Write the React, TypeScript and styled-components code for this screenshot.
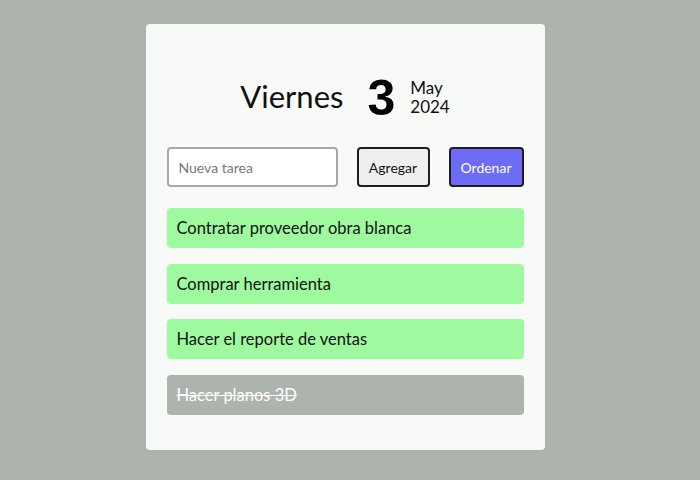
import * as React from "react";
import styled, { createGlobalStyle } from "styled-components";

const GlobalStyle = createGlobalStyle`
  html, body {
    margin: 0;
    padding: 0;
    background: #adb4ad;
    font-family: Lato, "Open Sans", sans-serif;
  }
`;

const Page = styled.div`
  width: 700px;
  height: 480px;
  display: flex;
  justify-content: center;
  padding: 24px 10px 0 0;
  box-sizing: border-box;
`;

const Card = styled.div`
  width: 399px;
  height: 426px;
  box-sizing: border-box;
  background: #f8faf8;
  border-radius: 4px;
  padding: 44px 21px 35px;
`;

const Header = styled.div`
  height: 60px;
  display: flex;
  align-items: center;
  justify-content: center;
  margin-bottom: 19px;
`;

const DayName = styled.span`
  font-size: 31px;
  color: #111;
  margin-right: 24px;
  margin-top: -4px;
`;

const DayNumber = styled.span`
  font-family: "Liberation Sans", Arial, sans-serif;
  font-weight: bold;
  font-size: 50px;
  color: #000;
  margin-right: 15px;
`;

const MonthYear = styled.div`
  display: flex;
  flex-direction: column;
  font-size: 17px;
  line-height: 19px;
  color: #111;
  margin-top: -3px;
`;

const Controls = styled.div`
  display: flex;
  justify-content: space-between;
  height: 40px;
  margin-bottom: 21px;
`;

const TaskInput = styled.input`
  width: 171px;
  height: 40px;
  box-sizing: border-box;
  border: 2px solid #a8a8a8;
  border-radius: 4px;
  background: #fff;
  padding: 0 10px;
  font-family: Lato, sans-serif;
  font-size: 14px;
  outline: none;
  &::placeholder {
    color: #777;
  }
`;

const Button = styled.button<{ $primary?: boolean; $width: number }>`
  width: ${(p) => p.$width}px;
  height: 40px;
  box-sizing: border-box;
  border: 2px solid #1e1e1e;
  border-radius: 4px;
  background: ${(p) => (p.$primary ? "#6c6cf7" : "#efefef")};
  color: ${(p) => (p.$primary ? "#fff" : "#111")};
  font-family: Lato, sans-serif;
  font-size: 14px;
  padding: 0;
  cursor: pointer;
`;

const TaskList = styled.div`
  display: flex;
  flex-direction: column;
  gap: 15.7px;
`;

const TaskItem = styled.div<{ $done?: boolean }>`
  height: 40px;
  display: flex;
  align-items: center;
  padding: 0 10px;
  border-radius: 4px;
  background: ${(p) => (p.$done ? "#adb4ad" : "#9ffa9f")};
  color: ${(p) => (p.$done ? "#fff" : "#111")};
  text-decoration: ${(p) => (p.$done ? "line-through" : "none")};
  font-size: 16.5px;
`;

const tasks = [
  { text: "Contratar proveedor obra blanca", done: false },
  { text: "Comprar herramienta", done: false },
  { text: "Hacer el reporte de ventas", done: false },
  { text: "Hacer planos 3D", done: true },
];

const App: React.FC = () => {
  const [value, setValue] = React.useState("");

  return (
    <Page>
      <GlobalStyle />
      <Card>
        <Header>
          <DayName>Viernes</DayName>
          <DayNumber>3</DayNumber>
          <MonthYear>
            <span>May</span>
            <span>2024</span>
          </MonthYear>
        </Header>
        <Controls>
          <TaskInput
            placeholder="Nueva tarea"
            value={value}
            onChange={(e) => setValue(e.target.value)}
          />
          <Button $width={73}>Agregar</Button>
          <Button $width={75} $primary>
            Ordenar
          </Button>
        </Controls>
        <TaskList>
          {tasks.map((t) => (
            <TaskItem key={t.text} $done={t.done}>
              {t.text}
            </TaskItem>
          ))}
        </TaskList>
      </Card>
    </Page>
  );
};

export default App;
